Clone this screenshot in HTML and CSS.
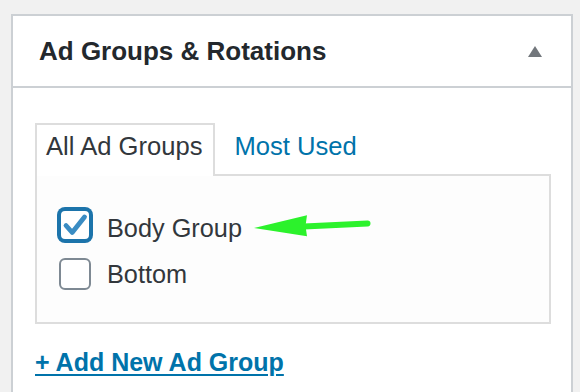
FILE: index.html
```html
<!DOCTYPE html>
<html lang="en">
<head>
<meta charset="utf-8">
<title>Ad Groups &amp; Rotations</title>
<link rel="stylesheet" href="styles.css">
</head>
<body>
<div class="card">
  <div class="card-header">
    <h2 class="card-title">Ad Groups &amp; Rotations</h2>
    <span class="toggle" aria-hidden="true"></span>
  </div>
  <div class="card-body">
    <ul class="tabs">
      <li class="tab active">All Ad Groups</li>
      <li class="tab"><a href="#">Most Used</a></li>
    </ul>
    <div class="panel">
      <label class="row">
        <span class="box checked">
          <svg width="28" height="28" viewBox="0 0 28 28"><path d="M5 14.5 L11.2 21.5 L23.5 6" fill="none" stroke="#3a8cc3" stroke-width="4.8" stroke-linecap="round" stroke-linejoin="round"/></svg>
        </span>
        <span class="label-text">Body Group</span>
      </label>
      <label class="row">
        <span class="box"></span>
        <span class="label-text">Bottom</span>
      </label>
      <svg class="arrow" width="125" height="32" viewBox="0 0 125 32">
        <line x1="52" y1="18.4" x2="115.5" y2="15.4" stroke="#2cf22c" stroke-width="6" stroke-linecap="round"/>
        <path d="M2 20 L55 7.3 L53.5 18 L55 28.3 Z" fill="#2cf22c"/>
      </svg>
    </div>
    <a class="add-link" href="#">+ Add New Ad Group</a>
  </div>
</div>
</body>
</html>
```
FILE: styles.css
```css
html, body {
  margin: 0;
  padding: 0;
}
body {
  background: #f1f1f1;
  padding: 14px 7px 0 11px;
  overflow: hidden;
  height: 392px;
  box-sizing: border-box;
  font-family: "Liberation Sans", Arial, sans-serif;
}
.card {
  background: #fff;
  border: 2px solid #ccd0d4;
  min-height: 420px;
}
.card-header {
  height: 70px;
  border-bottom: 2px solid #ccd0d4;
  display: flex;
  align-items: center;
  justify-content: space-between;
  padding: 0 29px 0 26px;
}
.card-title {
  margin: 0;
  font-size: 26px;
  line-height: 30px;
  font-weight: bold;
  color: #23282d;
}
.toggle {
  width: 0;
  height: 0;
  border-left: 7px solid transparent;
  border-right: 7px solid transparent;
  border-bottom: 11px solid #72777c;
  margin-top: 1px;
}
.card-body {
  padding: 35px 20px 0 22px;
}
.tabs {
  list-style: none;
  margin: 0 0 -2px 0;
  padding: 0;
  display: flex;
  align-items: flex-start;
}
.tab {
  font-size: 25.6px;
  line-height: 30px;
  color: #32373c;
  padding: 6px 10px 15px 10px;
  border: 2px solid transparent;
  border-bottom: none;
}
.tab.active {
  border-color: #dddddd;
  background: #fff;
  position: relative;
  z-index: 1;
  padding-left: 9px;
}
.tab a {
  color: #0073aa;
  text-decoration: none;
}
.tab + .tab {
  padding-left: 18px;
}
.panel {
  position: relative;
  border: 2px solid #dddddd;
  background: #fdfdfd;
  padding: 36px 0 32px 22px;
  display: flex;
  flex-direction: column;
  gap: 14px;
}
.row {
  display: flex;
  align-items: flex-start;
  gap: 16px;
  height: 32px;
}
.box {
  width: 32px;
  height: 32px;
  box-sizing: border-box;
  border: 2px solid #7e8993;
  border-radius: 6px;
  background: #fff;
  display: flex;
  align-items: center;
  justify-content: center;
  flex: none;
}
.box.checked {
  border-color: #1c74ab;
  box-shadow: 0 0 0 2px #1c74ab;
  margin-top: -3px;
}
.label-text {
  font-size: 25.3px;
  line-height: 32px;
  color: #32373c;
}
.arrow {
  position: absolute;
  left: 215px;
  top: 32px;
}
.add-link {
  display: inline-block;
  margin-top: 23px;
  font-size: 25px;
  line-height: 30px;
  font-weight: bold;
  color: #0073aa;
  text-decoration: underline;
  text-decoration-thickness: 2px;
  text-underline-offset: 3px;
}
```
